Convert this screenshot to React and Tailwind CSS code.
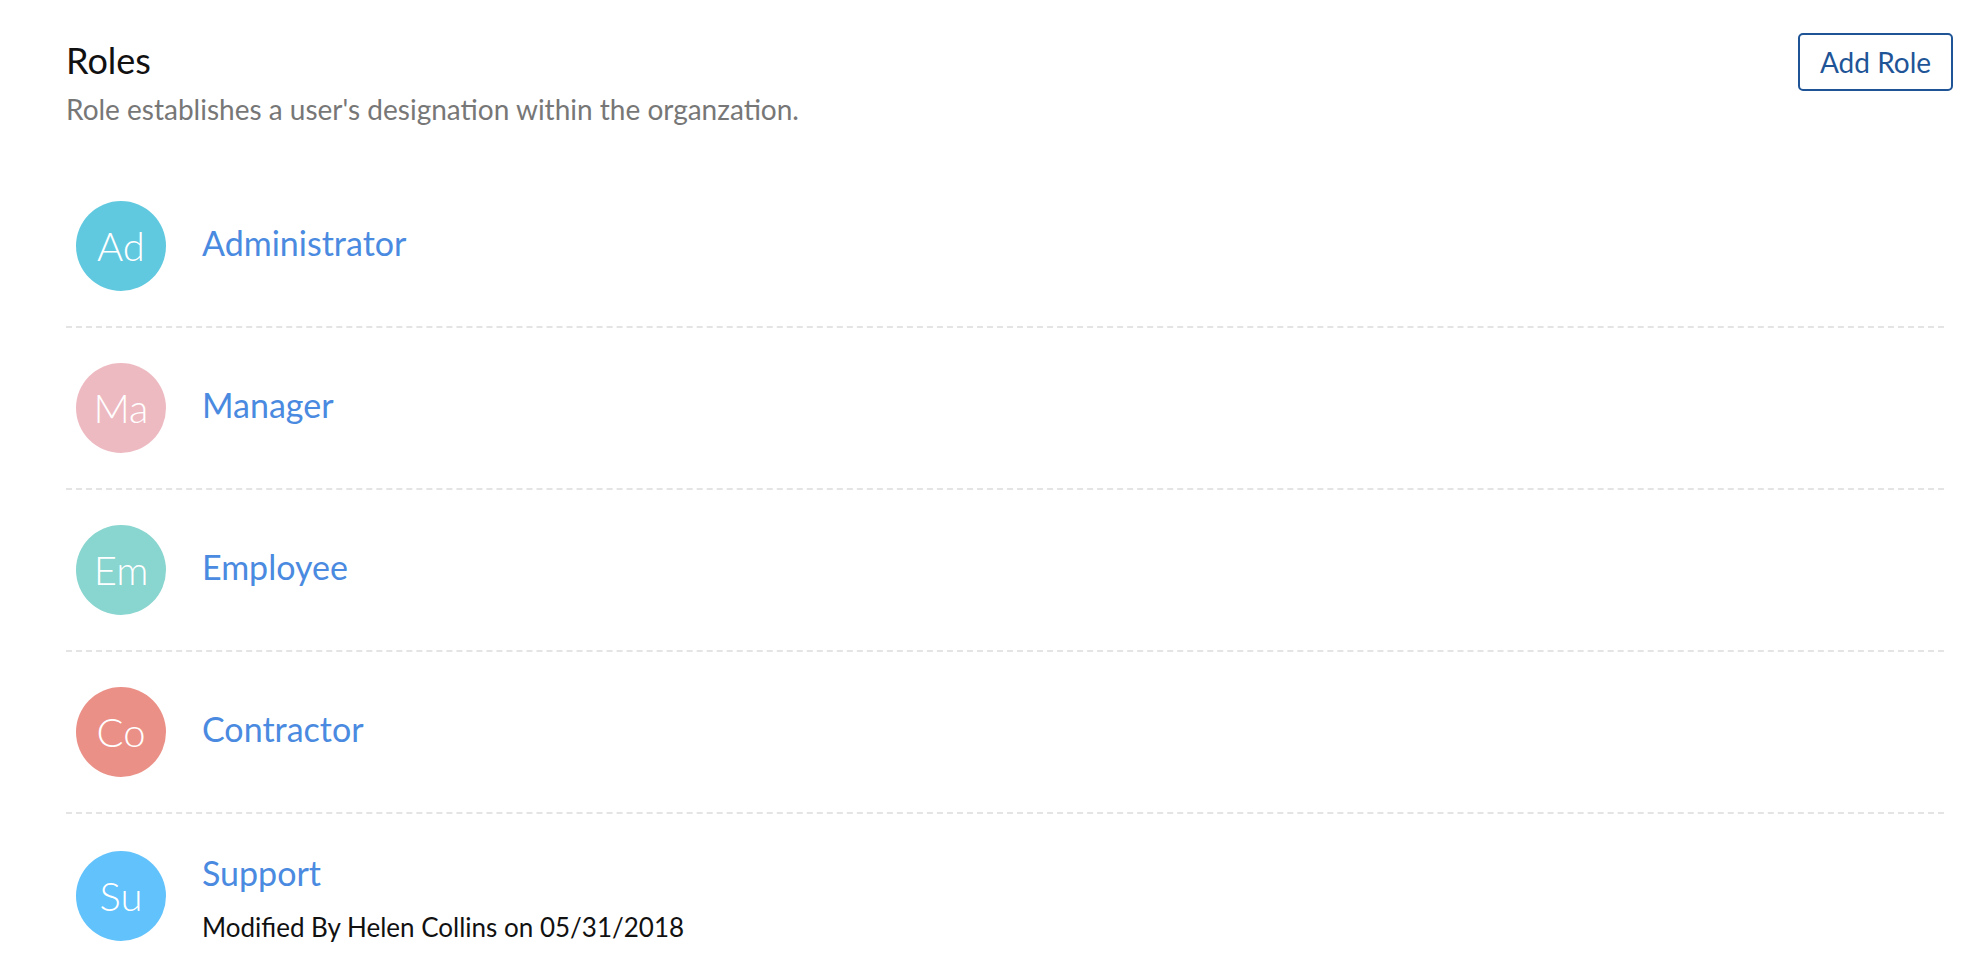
import { useState } from 'react';

const roles = [
  { id: 1, name: 'Administrator', initials: 'Ad', color: 'bg-[#61c9df]' },
  { id: 2, name: 'Manager', initials: 'Ma', color: 'bg-[#eebac2]' },
  { id: 3, name: 'Employee', initials: 'Em', color: 'bg-[#89d5cf]' },
  { id: 4, name: 'Contractor', initials: 'Co', color: 'bg-[#eb9087]' },
  { id: 5, name: 'Support', initials: 'Su', color: 'bg-[#62c2fb]', modified: 'Modified By Helen Collins on 05/31/2018' },
];

function RoleRow({ role, last }) {
  return (
    <li
      className={`flex items-center pl-[10px] py-[35px] ${
        last ? '' : 'border-b-2 border-dashed border-[#e4e4e4]'
      }`}
    >
      <div
        className={`flex h-[90px] w-[90px] shrink-0 items-center justify-center rounded-full ${role.color} text-[40px] font-light leading-none text-white`}
      >
        {role.initials}
      </div>
      {role.modified ? (
        <div className="ml-[36px] mt-[4px] flex flex-col gap-[18px]">
          <a href="#" className="text-[34px] leading-[40px] text-[#4a8ae0]">
            {role.name}
          </a>
          <span className="text-[26px] leading-[32px] text-[#111]">{role.modified}</span>
        </div>
      ) : (
        <a href="#" className="ml-[36px] mb-[6px] text-[34px] leading-[40px] text-[#4a8ae0]">
          {role.name}
        </a>
      )}
    </li>
  );
}

export default function App() {
  const [items] = useState(roles);

  return (
    <div className="min-h-screen bg-white pl-[66px] pr-[25px] pt-[33px] font-['Lato','Liberation_Sans',sans-serif]">
      {/* Header */}
      <div className="flex items-start justify-between">
        <div className="mt-[5px]">
          <h1 className="text-[36px] font-normal leading-[44px] text-[#111]">Roles</h1>
          <p className="mt-[11px] text-[28px] leading-[32px] text-[#777]">
            Role establishes a user's designation within the organzation.
          </p>
        </div>
        <button className="flex h-[58px] w-[155px] items-center justify-center rounded-[5px] border-2 border-[#1f5597] text-[28px] text-[#1f5597]">
          Add Role
        </button>
      </div>

      {/* Role list */}
      <ul className="mr-[9px] mt-[41px]">
        {items.map((role, i) => (
          <RoleRow key={role.id} role={role} last={i === items.length - 1} />
        ))}
      </ul>
    </div>
  );
}
